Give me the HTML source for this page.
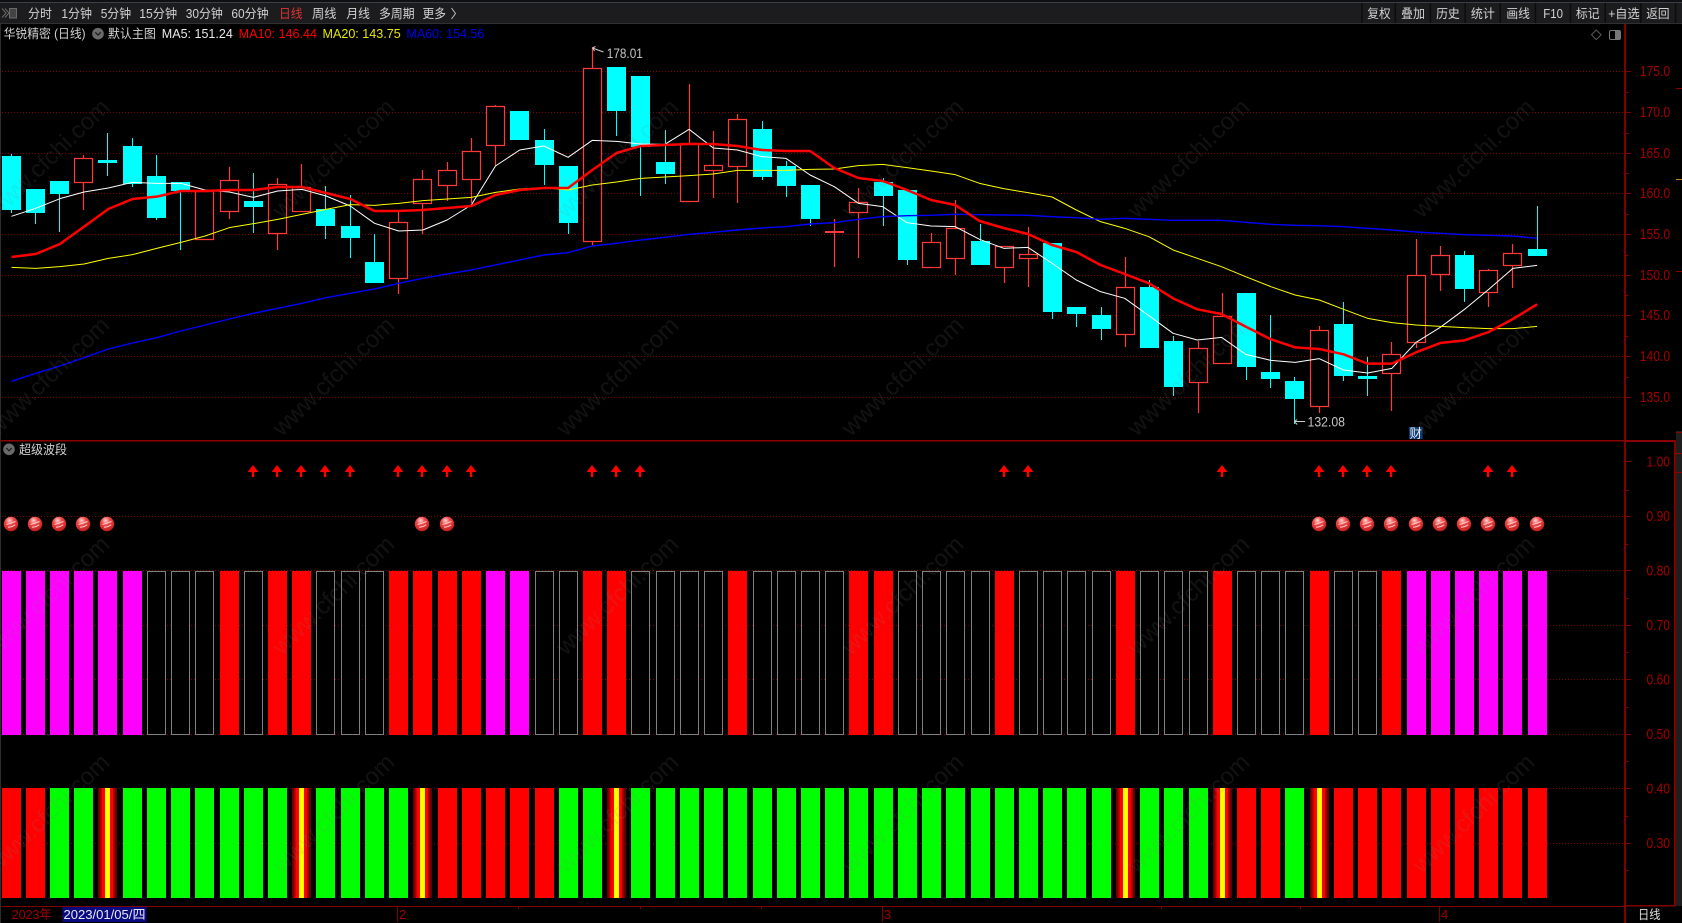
<!DOCTYPE html>
<html lang="zh"><head><meta charset="utf-8"><title>华锐精密</title>
<style>
html,body{margin:0;padding:0;background:#000;width:1682px;height:923px;overflow:hidden}
svg{display:block}
text{font-family:"Liberation Sans","Noto Sans CJK SC",sans-serif}
.t{font-size:12.5px;fill:#d2d2d2}
.a{font-size:14.5px;fill:#a00000}
.w{font-size:24px;fill:rgba(128,128,128,.14);text-anchor:end}
.m{fill:none;vector-effect:non-scaling-stroke;stroke-linejoin:round}
</style></head><body>
<svg width="1682" height="923" viewBox="0 0 1682 923" xmlns="http://www.w3.org/2000/svg">
<defs>
<linearGradient id="fl" x1="0" x2="1" y1="0" y2="0">
<stop offset="0" stop-color="#600000"/><stop offset=".08" stop-color="#600000"/><stop offset=".08" stop-color="#a00000"/><stop offset=".19" stop-color="#a00000"/><stop offset=".19" stop-color="#f00"/><stop offset=".36" stop-color="#f00"/><stop offset=".36" stop-color="#ff0"/><stop offset=".62" stop-color="#ff0"/><stop offset=".62" stop-color="#f00"/><stop offset=".79" stop-color="#f00"/><stop offset=".79" stop-color="#a00000"/><stop offset=".9" stop-color="#a00000"/><stop offset=".9" stop-color="#600000"/><stop offset="1" stop-color="#600000"/>
</linearGradient>
<radialGradient id="bg" cx=".4" cy=".26" r=".8"><stop offset="0" stop-color="#ffd8d8"/><stop offset=".36" stop-color="#f04848"/><stop offset="1" stop-color="#bc1818"/></radialGradient>
<g id="b"><circle r="7.200" fill="url(#bg)"/><path d="M-4.500 .5Q0-.5 4.500-2.500M-3 3.200Q1 3 4.200 .8" fill="none" stroke="#ffc8c8" stroke-width="1"/></g>
<path id="r" d="M0 465l5.400 7h-4.200v5h-2.400v-5h-4.200z" fill="#f00"/>
</defs>

<!-- toolbar -->
<rect x="0" y="0" width="1682" height="24" fill="#1c1c1e"/>
<rect x="0" y="0" width="1682" height="2" fill="#101012"/>
<rect x="0" y="2" width="1682" height="1" fill="#3a4048"/>
<rect x="0" y="23" width="1682" height="1" fill="#303032"/>
<path d="M2 8.500l4 4.500-4 4.500M5 8.500l4 4.500-4 4.500" fill="none" stroke="#6a6a6a" stroke-width="1"/>
<rect x="9.500" y="8.500" width="7" height="9.500" fill="#444" stroke="#6a6a6a"/>
<text class="t" x="28" y="18" textLength="24" lengthAdjust="spacingAndGlyphs">分时</text>
<text class="t" x="61.400" y="18" textLength="30.600" lengthAdjust="spacingAndGlyphs">1分钟</text>
<text class="t" x="100.700" y="18" textLength="30.400" lengthAdjust="spacingAndGlyphs">5分钟</text>
<text class="t" x="139.300" y="18" textLength="37.800" lengthAdjust="spacingAndGlyphs">15分钟</text>
<text class="t" x="185.700" y="18" textLength="37.200" lengthAdjust="spacingAndGlyphs">30分钟</text>
<text class="t" x="231.400" y="18" textLength="37.200" lengthAdjust="spacingAndGlyphs">60分钟</text>
<text class="t" x="279" y="18" textLength="23.500" lengthAdjust="spacingAndGlyphs" style="fill:#e03434">日线</text>
<text class="t" x="312" y="18" textLength="24.400" lengthAdjust="spacingAndGlyphs">周线</text>
<text class="t" x="346.400" y="18" textLength="23.600" lengthAdjust="spacingAndGlyphs">月线</text>
<text class="t" x="379" y="18" textLength="35.600" lengthAdjust="spacingAndGlyphs">多周期</text>
<text class="t" x="422.500" y="18" textLength="23.500" lengthAdjust="spacingAndGlyphs">更多</text>
<path d="M451.500 8l4 5.500-4 5.500" fill="none" stroke="#bbb" stroke-width="1"/>
<path d="M1362 3v20M1395.300 3v20M1430.400 3v20M1465.200 3v20M1500.300 3v20M1535.400 3v20M1570.500 3v20M1605.300 3v20M1640.800 3v20M1675.600 3v20" stroke="#0c0c0c" stroke-width="1.500"/>
<text class="t" x="1367.300" y="18" textLength="23.300" lengthAdjust="spacingAndGlyphs">复权</text>
<text class="t" x="1401" y="18" textLength="24" lengthAdjust="spacingAndGlyphs">叠加</text>
<text class="t" x="1436.100" y="18" textLength="23.700" lengthAdjust="spacingAndGlyphs">历史</text>
<text class="t" x="1470.900" y="18" textLength="24" lengthAdjust="spacingAndGlyphs">统计</text>
<text class="t" x="1506.400" y="18" textLength="23.600" lengthAdjust="spacingAndGlyphs">画线</text>
<text class="t" x="1543.300" y="18" textLength="19.700" lengthAdjust="spacingAndGlyphs">F10</text>
<text class="t" x="1575.900" y="18" textLength="23.700" lengthAdjust="spacingAndGlyphs">标记</text>
<text class="t" x="1608.200" y="18" textLength="31.500" lengthAdjust="spacingAndGlyphs">+自选</text>
<text class="t" x="1646.200" y="18" textLength="23.300" lengthAdjust="spacingAndGlyphs">返回</text>

<!-- left edge -->
<rect x="0" y="24" width="1" height="899" fill="#2e2e2e"/>

<!-- header row -->
<text class="t" x="3.600" y="38" textLength="82" lengthAdjust="spacingAndGlyphs">华锐精密 (日线)</text>
<circle cx="98" cy="33.700" r="5.800" fill="#6a6a6a"/><path d="M95.300 32.300l2.700 2.800 2.700-2.800" fill="none" stroke="#1c1c1c" stroke-width="1.200"/>
<text class="t" x="107.900" y="38" textLength="48" lengthAdjust="spacingAndGlyphs">默认主图</text>
<text class="t" x="161.800" y="38" textLength="71" lengthAdjust="spacingAndGlyphs" style="font-size:13px;fill:#e8e8e8">MA5: 151.24</text>
<text class="t" x="238.600" y="38" textLength="78.400" lengthAdjust="spacingAndGlyphs" style="font-size:13px;fill:#f00">MA10: 146.44</text>
<text class="t" x="322.500" y="38" textLength="78.200" lengthAdjust="spacingAndGlyphs" style="font-size:13px;fill:#e6e600">MA20: 143.75</text>
<text class="t" x="406.400" y="38" textLength="78" lengthAdjust="spacingAndGlyphs" style="font-size:13px;fill:#0000ee">MA60: 154.56</text>
<path d="M1596.300 30l4.800 4.800-4.800 4.800-4.800-4.800z" fill="none" stroke="#5a5a5a"/>
<rect x="1609.500" y="30.500" width="11" height="9" rx="1.500" fill="none" stroke="#777"/><rect x="1615" y="31" width="5" height="8" fill="#777"/>

<!-- grid -->
<path d="M2 71.500H1624M2 112.500H1624M2 153.500H1624M2 193.500H1624M2 234.500H1624M2 275.500H1624M2 315.500H1624M2 356.500H1624M2 397.500H1624M2 516.500H1624M2 570.500H1624M2 625.500H1624M2 679.500H1624M2 734.500H1624M2 788.500H1624M2 843.500H1624" stroke="#7a0000" stroke-width="1" stroke-dasharray="1 2"/>

<!-- candle wicks -->
<path d="M11.500 154V213M35.500 189V224M59.500 181V232M107.500 133V176M132.500 138V187M156.500 155V220M180.500 182V250M253.500 173V233M325.500 186V239M350.500 195V258M374.500 234V283M519.500 111V140M544.500 129V185M568.500 166V234M616.500 67V136M640.500 76V196M665.500 130V184M762.500 121V180M786.500 161V197M810.500 185V226M883.500 178V226M907.500 190V265M980.500 224V265M1052.500 243V319M1076.500 307V327M1101.500 307V340M1149.500 280V348M1173.500 336V396M1246.500 293V380M1270.500 315V388M1294.500 377V424M1343.500 302V381M1367.500 357V396M1464.500 251V302M1537.500 206V256" stroke="#0ff" stroke-width="1"/>
<path d="M83.500 155V210M229.500 167V219M277.500 178V250M301.500 164V211M398.500 211V294M422.500 170V234M447.500 162V201M471.500 138V203M495.500 105V166M592.500 47V245M689.500 84V201M713.500 131V198M737.500 114V203M834.500 219V267M858.500 188V258M931.500 233V267M955.500 200V275M1004.500 246V283M1028.500 227V287M1125.500 257V347M1198.500 341V413M1222.500 293V363M1319.500 326V413M1391.500 342V411M1416.500 239V348M1440.500 246V291M1488.500 269V307M1512.500 244V288" stroke="#ff3838" stroke-width="1.200"/>
<!-- cyan bodies -->
<path fill="#0ff" d="M2 156h19V210h-19zM26 189h19V213h-19zM50 181h19V194h-19zM98 160h19V163h-19zM123 146h19V184h-19zM147 176h19V218h-19zM171 182h19V191h-19zM244 201h19V207h-19zM316 209h19V226h-19zM341 226h19V238h-19zM365 262h19V283h-19zM510 111h19V140h-19zM535 140h19V165h-19zM559 166h19V223h-19zM607 67h19V111h-19zM631 76h19V147h-19zM656 162h19V174h-19zM753 129h19V177h-19zM777 166h19V186h-19zM801 185h19V219h-19zM874 182h19V196h-19zM898 190h19V260h-19zM971 241h19V265h-19zM1043 243h19V312h-19zM1067 307h19V314h-19zM1092 315h19V329h-19zM1140 287h19V348h-19zM1164 341h19V387h-19zM1237 293h19V367h-19zM1261 372h19V379h-19zM1285 381h19V399h-19zM1334 324h19V376h-19zM1358 376h19V379h-19zM1455 255h19V289h-19zM1528 249h19V256h-19z"/>
<!-- red bodies -->
<path fill="#000" stroke="#ff3838" stroke-width="1.200" d="M74.500 158.500h18V182.500h-18zM195.500 191.500h18V239.500h-18zM220.500 180.500h18V211.500h-18zM268.500 184.500h18V233.500h-18zM292.500 187.500h18V211.500h-18zM389.500 222.500h18V278.500h-18zM413.500 179.500h18V203.500h-18zM438.500 170.500h18V185.500h-18zM462.500 151.500h18V179.500h-18zM486.500 106.500h18V145.500h-18zM583.500 68.500h18V241.500h-18zM680.500 143.500h18V201.500h-18zM704.500 165.500h18V170.500h-18zM728.500 119.500h18V166.500h-18zM849.500 202.500h18V212.500h-18zM922.500 242.500h18V267.500h-18zM946.500 228.500h18V258.500h-18zM995.500 246.500h18V267.500h-18zM1019.500 254.500h18V258.500h-18zM1116.500 287.500h18V334.500h-18zM1189.500 348.500h18V382.500h-18zM1213.500 316.500h18V363.500h-18zM1310.500 330.500h18V406.500h-18zM1382.500 354.500h18V373.500h-18zM1407.500 275.500h18V342.500h-18zM1431.500 255.500h18V274.500h-18zM1479.500 270.500h18V292.500h-18zM1503.500 253.500h18V265.500h-18z"/>
<rect x="825" y="231" width="19" height="2" fill="#ff3838"/>

<!-- moving averages (y in 1/3 px units) -->
<g transform="scale(1 .33333)">
<polyline class="m" stroke="#fff" stroke-width="1" points="11.5,649 35.7,625 59.9,596 84.1,576 108.3,564 132.5,547 156.7,550 180.9,550 205.1,570 229.3,576 253.5,592 277.7,573 301.9,568 326.1,588 350.3,618 374.5,670 398.7,693 422.9,690 447.1,660 471.3,615 495.5,498 519.7,450 543.9,438 568.1,472 592.3,421 616.5,424 640.7,432 664.9,433 689.1,388 713.3,444 737.5,450 761.7,470 785.9,475 810.1,525 834.3,560 858.5,610 882.7,620 906.9,668 931.1,678 955.3,680 979.5,718 1003.7,745 1027.9,742 1052.1,790 1076.3,840 1100.5,875 1124.7,895 1148.9,947 1173.1,1000 1197.3,1020 1221.5,1012 1245.7,1063 1270.9,1081 1295.1,1087 1319.3,1076 1343.5,1110 1367.7,1119 1391.9,1105 1416.1,1027 1440.3,982 1464.5,928 1488.7,868 1512.9,805 1537.1,796"/>
<polyline class="m" stroke="#ff0" stroke-width="1" points="11.5,802 35.7,805 59.9,800 84.1,792 108.3,775 132.5,764 156.7,745 180.9,727 205.1,708 229.3,683 253.5,671 277.7,658 301.9,643 326.1,628 350.3,614 374.5,616 398.7,610 422.9,602 447.1,597 471.3,592 495.5,577 519.7,567 543.9,563 568.1,570 592.3,555 616.5,546 640.7,535 664.9,531 689.1,527 713.3,522 737.5,511 761.7,511 785.9,511 810.1,508 834.3,507 858.5,497 882.7,493 906.9,503 931.1,513 955.3,524 979.5,550 1003.7,566 1027.9,578 1052.1,591 1076.3,630 1100.5,665 1124.7,685 1148.9,710 1173.1,750 1197.3,775 1221.5,800 1245.7,830 1270.9,860 1295.1,885 1319.3,900 1343.5,928 1367.7,955 1391.9,968 1416.1,975 1440.3,979 1464.5,983 1488.7,986 1512.9,986 1537.1,979"/>
<polyline class="m" stroke="#00f" stroke-width="1.400" points="11.5,1144 35.7,1120 59.9,1098 84.1,1073 108.3,1047 132.5,1029 156.7,1013 180.9,993 205.1,975 229.3,957 253.5,940 277.7,925 301.9,910 326.1,893 350.3,880 374.5,867 398.7,850 422.9,835 447.1,822 471.3,810 495.5,795 519.7,780 543.9,765 568.1,758 592.3,738 616.5,730 640.7,720 664.9,712 689.1,703 713.3,697 737.5,690 761.7,684 785.9,680 810.1,672 834.3,668 858.5,658 882.7,650 906.9,647 931.1,646 955.3,643 979.5,644 1003.7,645 1027.9,646 1052.1,650 1076.3,653 1100.5,658 1124.7,655 1148.9,658 1173.1,661 1197.3,661 1221.5,661 1245.7,667 1270.9,673 1295.1,676 1319.3,677 1343.5,680 1367.7,685 1391.9,690 1416.1,696 1440.3,700 1464.5,704 1488.7,706 1512.9,708 1537.1,715"/>
<polyline class="m" stroke="#f00" stroke-width="2.500" points="11.5,771 35.7,762 59.9,732 84.1,680 108.3,627 132.5,597 156.7,590 180.9,573 205.1,573 229.3,570 253.5,570 277.7,561 301.9,561 326.1,579 350.3,597 374.5,633 398.7,633 422.9,630 447.1,624 471.3,618 495.5,585 519.7,570 543.9,564 568.1,564 592.3,510 616.5,459 640.7,438 664.9,435 689.1,432 713.3,432 737.5,438 761.7,450 785.9,453 810.1,453 834.3,504 858.5,534 882.7,543 906.9,570 931.1,600 955.3,615 979.5,663 1003.7,684 1027.9,702 1052.1,735 1076.3,756 1100.5,795 1124.7,822 1148.9,850 1173.1,895 1197.3,928 1221.5,942 1245.7,980 1270.9,1018 1295.1,1042 1319.3,1047 1343.5,1063 1367.7,1091 1391.9,1091 1416.1,1057 1440.3,1029 1464.5,1021 1488.7,996 1512.9,957 1537.1,913"/>
</g>

<!-- high/low labels -->
<path d="M592.500 48l11 4M592.500 48l3-1.500M592.500 48l2 3M1294.200 421.500h11M1294.200 421.500l3-2M1294.200 421.500l3 3" stroke="#ccc" fill="none" stroke-width="1"/>
<text class="t" x="606.800" y="58" textLength="36" lengthAdjust="spacingAndGlyphs" style="font-size:13.500px;fill:#c4c4c4">178.01</text>
<text class="t" x="1307.500" y="426.500" textLength="37.500" lengthAdjust="spacingAndGlyphs" style="font-size:13.500px;fill:#c4c4c4">132.08</text>
<rect x="1409" y="427" width="13.500" height="12" fill="#0a3c78"/>
<text class="t" x="1409.500" y="437.800" textLength="12.500" lengthAdjust="spacingAndGlyphs" style="font-size:13px;fill:#f0f0f0">财</text>

<!-- lower pane header -->
<circle cx="9" cy="449.300" r="5.800" fill="#6a6a6a"/><path d="M6.300 448l2.700 2.800 2.700-2.800" fill="none" stroke="#1c1c1c" stroke-width="1.200"/>
<text class="t" x="19" y="453.800" textLength="48" lengthAdjust="spacingAndGlyphs">超级波段</text>

<!-- arrows -->
<use href="#r" x="253"/><use href="#r" x="277"/><use href="#r" x="301"/><use href="#r" x="325"/><use href="#r" x="350"/><use href="#r" x="398"/><use href="#r" x="422"/><use href="#r" x="447"/><use href="#r" x="471"/><use href="#r" x="592"/><use href="#r" x="616"/><use href="#r" x="640"/><use href="#r" x="1004"/><use href="#r" x="1028"/><use href="#r" x="1222"/><use href="#r" x="1319"/><use href="#r" x="1343"/><use href="#r" x="1367"/><use href="#r" x="1391"/><use href="#r" x="1488"/><use href="#r" x="1512"/>

<!-- balls -->
<use href="#b" x="11" y="524"/><use href="#b" x="35" y="524"/><use href="#b" x="59" y="524"/><use href="#b" x="83" y="524"/><use href="#b" x="107" y="524"/><use href="#b" x="422" y="524"/><use href="#b" x="447" y="524"/><use href="#b" x="1319" y="524"/><use href="#b" x="1343" y="524"/><use href="#b" x="1367" y="524"/><use href="#b" x="1391" y="524"/><use href="#b" x="1416" y="524"/><use href="#b" x="1440" y="524"/><use href="#b" x="1464" y="524"/><use href="#b" x="1488" y="524"/><use href="#b" x="1512" y="524"/><use href="#b" x="1537" y="524"/>

<!-- upper band bars -->
<path fill="#f0f" d="M2 571h19v164h-19zM26 571h19v164h-19zM50 571h19v164h-19zM74 571h19v164h-19zM98 571h19v164h-19zM123 571h19v164h-19zM486 571h19v164h-19zM510 571h19v164h-19zM1407 571h19v164h-19zM1431 571h19v164h-19zM1455 571h19v164h-19zM1479 571h19v164h-19zM1503 571h19v164h-19zM1528 571h19v164h-19z"/>
<path fill="#f00" d="M220 571h19v164h-19zM268 571h19v164h-19zM292 571h19v164h-19zM389 571h19v164h-19zM413 571h19v164h-19zM438 571h19v164h-19zM462 571h19v164h-19zM583 571h19v164h-19zM607 571h19v164h-19zM728 571h19v164h-19zM849 571h19v164h-19zM874 571h19v164h-19zM995 571h19v164h-19zM1116 571h19v164h-19zM1213 571h19v164h-19zM1310 571h19v164h-19zM1382 571h19v164h-19z"/>
<path fill="#000" stroke="#7f7f7f" stroke-width="1" d="M147.500 571.500h18v163h-18zM171.500 571.500h18v163h-18zM195.500 571.500h18v163h-18zM244.500 571.500h18v163h-18zM316.500 571.500h18v163h-18zM341.500 571.500h18v163h-18zM365.500 571.500h18v163h-18zM535.500 571.500h18v163h-18zM559.500 571.500h18v163h-18zM631.500 571.500h18v163h-18zM656.500 571.500h18v163h-18zM680.500 571.500h18v163h-18zM704.500 571.500h18v163h-18zM753.500 571.500h18v163h-18zM777.500 571.500h18v163h-18zM801.500 571.500h18v163h-18zM825.500 571.500h18v163h-18zM898.500 571.500h18v163h-18zM922.500 571.500h18v163h-18zM946.500 571.500h18v163h-18zM971.500 571.500h18v163h-18zM1019.500 571.500h18v163h-18zM1043.500 571.500h18v163h-18zM1067.500 571.500h18v163h-18zM1092.500 571.500h18v163h-18zM1140.500 571.500h18v163h-18zM1164.500 571.500h18v163h-18zM1189.500 571.500h18v163h-18zM1237.500 571.500h18v163h-18zM1261.500 571.500h18v163h-18zM1285.500 571.500h18v163h-18zM1334.500 571.500h18v163h-18zM1358.500 571.500h18v163h-18z"/>

<!-- lower band bars -->
<path fill="#f00" d="M2 788h19v110h-19zM26 788h19v110h-19zM438 788h19v110h-19zM462 788h19v110h-19zM486 788h19v110h-19zM510 788h19v110h-19zM535 788h19v110h-19zM1237 788h19v110h-19zM1261 788h19v110h-19zM1334 788h19v110h-19zM1358 788h19v110h-19zM1382 788h19v110h-19zM1407 788h19v110h-19zM1431 788h19v110h-19zM1455 788h19v110h-19zM1479 788h19v110h-19zM1503 788h19v110h-19zM1528 788h19v110h-19z"/>
<path fill="#0f0" d="M50 788h19v110h-19zM74 788h19v110h-19zM123 788h19v110h-19zM147 788h19v110h-19zM171 788h19v110h-19zM195 788h19v110h-19zM220 788h19v110h-19zM244 788h19v110h-19zM268 788h19v110h-19zM316 788h19v110h-19zM341 788h19v110h-19zM365 788h19v110h-19zM389 788h19v110h-19zM559 788h19v110h-19zM583 788h19v110h-19zM631 788h19v110h-19zM656 788h19v110h-19zM680 788h19v110h-19zM704 788h19v110h-19zM728 788h19v110h-19zM753 788h19v110h-19zM777 788h19v110h-19zM801 788h19v110h-19zM825 788h19v110h-19zM849 788h19v110h-19zM874 788h19v110h-19zM898 788h19v110h-19zM922 788h19v110h-19zM946 788h19v110h-19zM971 788h19v110h-19zM995 788h19v110h-19zM1019 788h19v110h-19zM1043 788h19v110h-19zM1067 788h19v110h-19zM1092 788h19v110h-19zM1140 788h19v110h-19zM1164 788h19v110h-19zM1189 788h19v110h-19zM1285 788h19v110h-19z"/>
<g fill="url(#fl)"><rect x="98" y="788" width="19" height="110"/><rect x="292" y="788" width="19" height="110"/><rect x="413" y="788" width="19" height="110"/><rect x="607" y="788" width="19" height="110"/><rect x="1116" y="788" width="19" height="110"/><rect x="1213" y="788" width="19" height="110"/><rect x="1310" y="788" width="19" height="110"/></g>

<!-- watermark -->
<g>
<text class="w" transform="translate(111 109) rotate(-44)">www.cfchi.com</text><text class="w" transform="translate(396 109) rotate(-44)">www.cfchi.com</text><text class="w" transform="translate(680 109) rotate(-44)">www.cfchi.com</text><text class="w" transform="translate(965 109) rotate(-44)">www.cfchi.com</text><text class="w" transform="translate(1251 109) rotate(-44)">www.cfchi.com</text><text class="w" transform="translate(1536 109) rotate(-44)">www.cfchi.com</text>
<text class="w" transform="translate(111 327) rotate(-44)">www.cfchi.com</text><text class="w" transform="translate(396 327) rotate(-44)">www.cfchi.com</text><text class="w" transform="translate(680 327) rotate(-44)">www.cfchi.com</text><text class="w" transform="translate(965 327) rotate(-44)">www.cfchi.com</text><text class="w" transform="translate(1251 327) rotate(-44)">www.cfchi.com</text><text class="w" transform="translate(1536 327) rotate(-44)">www.cfchi.com</text>
<text class="w" transform="translate(111 546) rotate(-44)">www.cfchi.com</text><text class="w" transform="translate(396 546) rotate(-44)">www.cfchi.com</text><text class="w" transform="translate(680 546) rotate(-44)">www.cfchi.com</text><text class="w" transform="translate(965 546) rotate(-44)">www.cfchi.com</text><text class="w" transform="translate(1251 546) rotate(-44)">www.cfchi.com</text><text class="w" transform="translate(1536 546) rotate(-44)">www.cfchi.com</text>
<text class="w" transform="translate(111 764) rotate(-44)">www.cfchi.com</text><text class="w" transform="translate(396 764) rotate(-44)">www.cfchi.com</text><text class="w" transform="translate(680 764) rotate(-44)">www.cfchi.com</text><text class="w" transform="translate(965 764) rotate(-44)">www.cfchi.com</text><text class="w" transform="translate(1251 764) rotate(-44)">www.cfchi.com</text><text class="w" transform="translate(1536 764) rotate(-44)">www.cfchi.com</text>
</g>

<!-- axes -->
<rect x="1624" y="24" width="2" height="899" fill="#800000"/>
<rect x="1" y="440" width="1675" height="1.500" fill="#8b0000"/>
<rect x="1626" y="440" width="50" height="2" fill="#8b0000"/>
<rect x="1674" y="440" width="2" height="466" fill="#800000"/>
<rect x="1626" y="905" width="50" height="1.500" fill="#800000"/>
<rect x="1" y="906" width="1624" height="1" fill="#800000"/>
<rect x="1676" y="431" width="6" height="475" fill="#1e1e1e"/>
<path d="M1676 88.500h6M1676 271.500h6M1676 432.500h6M1676 453.500h6M1676 472.500h6" stroke="#8b0000"/>
<path d="M1676 179.500h6" stroke="#c08020"/>
<path d="M1626 71.500h5M1626 112.500h5M1626 153.500h5M1626 193.500h5M1626 234.500h5M1626 275.500h5M1626 315.500h5M1626 356.500h5M1626 397.500h5M1626 92.500h2.500M1626 133.500h2.500M1626 173.500h2.500M1626 214.500h2.500M1626 255.500h2.500M1626 295.500h2.500M1626 336.500h2.500M1626 377.500h2.500M1626 461.500h5M1626 516.500h5M1626 570.500h5M1626 625.500h5M1626 679.500h5M1626 734.500h5M1626 788.500h5M1626 843.500h5M1626 490.500h2.500M1626 544.500h2.500M1626 598.500h2.500M1626 652.500h2.500M1626 707.500h2.500M1626 761.500h2.500M1626 816.500h2.500M1626 870.500h2.500" stroke="#800000" fill="none"/>
<text class="a" x="1639.700" y="76" textLength="30.400" lengthAdjust="spacingAndGlyphs">175.0</text>
<text class="a" x="1639.700" y="117" textLength="30.400" lengthAdjust="spacingAndGlyphs">170.0</text>
<text class="a" x="1639.700" y="158" textLength="30.400" lengthAdjust="spacingAndGlyphs">165.0</text>
<text class="a" x="1639.700" y="198" textLength="30.400" lengthAdjust="spacingAndGlyphs">160.0</text>
<text class="a" x="1639.700" y="239" textLength="30.400" lengthAdjust="spacingAndGlyphs">155.0</text>
<text class="a" x="1639.700" y="280" textLength="30.400" lengthAdjust="spacingAndGlyphs">150.0</text>
<text class="a" x="1639.700" y="320" textLength="30.400" lengthAdjust="spacingAndGlyphs">145.0</text>
<text class="a" x="1639.700" y="361" textLength="30.400" lengthAdjust="spacingAndGlyphs">140.0</text>
<text class="a" x="1639.700" y="402" textLength="30.400" lengthAdjust="spacingAndGlyphs">135.0</text>
<text class="a" x="1646.500" y="466.500" textLength="23.500" lengthAdjust="spacingAndGlyphs">1.00</text>
<text class="a" x="1646.500" y="521" textLength="23.500" lengthAdjust="spacingAndGlyphs">0.90</text>
<text class="a" x="1646.500" y="575.500" textLength="23.500" lengthAdjust="spacingAndGlyphs">0.80</text>
<text class="a" x="1646.500" y="630" textLength="23.500" lengthAdjust="spacingAndGlyphs">0.70</text>
<text class="a" x="1646.500" y="684.500" textLength="23.500" lengthAdjust="spacingAndGlyphs">0.60</text>
<text class="a" x="1646.500" y="739" textLength="23.500" lengthAdjust="spacingAndGlyphs">0.50</text>
<text class="a" x="1646.500" y="793.500" textLength="23.500" lengthAdjust="spacingAndGlyphs">0.40</text>
<text class="a" x="1646.500" y="848" textLength="23.500" lengthAdjust="spacingAndGlyphs">0.30</text>

<!-- time axis -->
<text class="a" x="11.800" y="919" textLength="40" lengthAdjust="spacingAndGlyphs" style="font-size:13px">2023年</text>
<rect x="62.500" y="907" width="84" height="15" fill="#0a0a80"/>
<text class="t" x="63.500" y="919" textLength="82" lengthAdjust="spacingAndGlyphs" style="font-size:13px;fill:#e8e8f4">2023/01/05/四</text>
<path d="M397.500 906v16M882.500 906v16M1439.500 906v16M518.500 906v3M640.500 906v3M761.500 906v3M1161.500 906v3M1300.500 906v3" stroke="#800000" fill="none"/>
<text class="a" x="399" y="919" style="font-size:13px">2</text>
<text class="a" x="884" y="919" style="font-size:13px">3</text>
<text class="a" x="1441" y="919" style="font-size:13px">4</text>
<text class="t" x="1638" y="919" textLength="22.500" lengthAdjust="spacingAndGlyphs" style="fill:#e0e0e0">日线</text>
</svg>
</body></html>
